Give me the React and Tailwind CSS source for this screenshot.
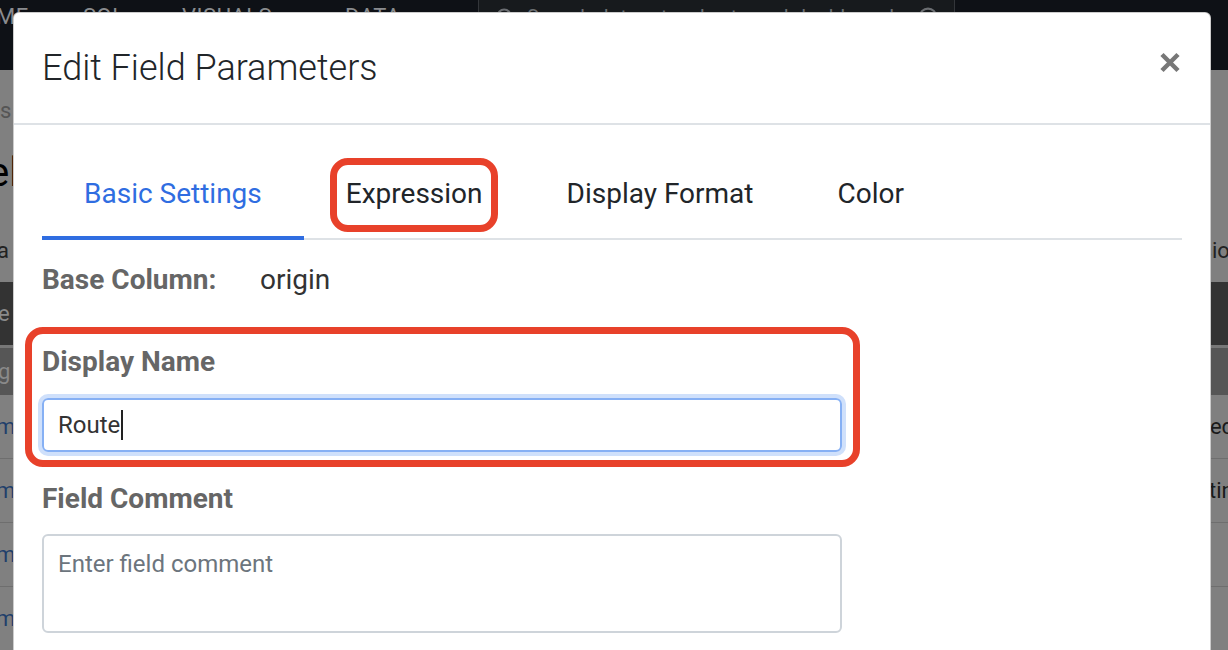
import { Search, CircleX } from 'lucide-react';

const tabs = ['Basic Settings', 'Expression', 'Display Format', 'Color'];

function BackdropRow({ left, right, className = '', leftClass = '', rightClass = '' }) {
    return (
        <div className={`flex items-center justify-between overflow-hidden ${className}`}>
            <span className={leftClass}>{left}</span>
            <span className={rightClass}>{right}</span>
        </div>
    );
}

export default function App() {
    return (
        <div className="relative h-[650px] w-[1228px] overflow-hidden bg-[#808080] font-[Roboto,sans-serif]">
            {/* Page behind the modal */}
            <div className="flex flex-col">
                <nav className="flex h-[70px] bg-[#0e1116] text-[22px] leading-none tracking-wide text-[#8a8c8f]">
                    <div className="-ml-[4px] w-[87px] pt-[6px]">ME</div>
                    <div className="w-[99px] pt-[6px]">SQL</div>
                    <div className="w-[163px] pt-[6px]">VISUALS</div>
                    <div className="w-[133px] pt-[6px]">DATA</div>
                    <div className="flex w-[477px] items-start gap-3 border-x border-[#33363a] bg-[#171a1d] px-4 pt-[7px] text-[#6b6e72]">
                        <Search size={20} strokeWidth={2.5} />
                        <span className="flex-1 text-[20px]">Search datasets, charts and dashboards</span>
                        <CircleX size={20} strokeWidth={2.5} />
                    </div>
                </nav>

                <div className="h-[25px]" />
                <BackdropRow className="h-[30px] text-[22px] text-[#555]" left="s" />
                <div className="h-[25px]" />
                <BackdropRow className="h-[45px] text-[40px] text-black" left="el" leftClass="-ml-[12px]" />
                <div className="h-[40px]" />
                <BackdropRow className="h-[30px] text-[22px] text-[#222]" left="a" leftClass="-ml-[3px]" right="sion" rightClass="-mr-[14px]" />
                <div className="h-[17px]" />
                <BackdropRow className="h-[63px] bg-[#333] text-[22px] text-[#8a8a8a]" left="e" leftClass="-ml-[2px]" />
                <BackdropRow className="h-[50px] border-t-[3px] border-[#777] bg-[#565656] text-[22px] text-[#8a8a8a]" left="g" leftClass="-ml-[2px]" />
                <div className="flex flex-col text-[22px]">
                    <BackdropRow className="h-[64px] border-b border-[#6e6e6e] text-[#1f3f6b]" left="m" leftClass="-ml-[4px]" right="ed" rightClass="-mr-[6px] text-[#1a1a1a]" />
                    <BackdropRow className="h-[64px] border-b border-[#6e6e6e] text-[#1f3f6b]" left="m" leftClass="-ml-[4px]" right="ting" rightClass="-mr-[18px] text-[#1a1a1a]" />
                    <BackdropRow className="h-[64px] border-b border-[#6e6e6e] text-[#1f3f6b]" left="m" leftClass="-ml-[4px]" />
                    <BackdropRow className="h-[64px] border-b border-[#6e6e6e] text-[#1f3f6b]" left="m" leftClass="-ml-[4px]" />
                </div>
            </div>

            {/* Modal */}
            <div className="absolute left-[13px] top-[12px] w-[1198px] h-[700px] rounded-[6px] border border-black/20 bg-white">
                <div className="flex h-[112px] items-center justify-between border-b-2 border-[#dee2e6] px-[28px]">
                    <h2 className="text-[36px] font-light text-[#212529]">Edit Field Parameters</h2>
                    <svg width="22" height="21" viewBox="0 0 22 21" className="-mt-[12px] mr-[1px]">
                        <path d="M3 2.5L19 18.5M19 2.5L3 18.5" stroke="#777" strokeWidth="4.5" />
                    </svg>
                </div>

                <div className="px-[28px] pt-[27px]">
                    <ul className="flex border-b-2 border-[#dee2e6]">
                        {tabs.map((t, i) => (
                            <li
                                key={t}
                                className={`-mb-[2px] border-b-4 px-[42px] pt-[27px] pb-[27px] text-[28px] leading-[30px] ${i === 0 ? 'border-[#2f6de1] text-[#2f6de1]' : 'border-transparent text-[#212529]'}`}
                            >
                                {t}
                            </li>
                        ))}
                    </ul>

                    <div className="mt-[25px] flex h-[30px] items-center">
                        <span className="w-[218px] text-[28px] font-bold text-[#666]">Base Column:</span>
                        <span className="text-[28px] text-[#333]">origin</span>
                    </div>

                    <div className="mt-[52px] text-[28px] font-bold leading-[30px] text-[#666]">Display Name</div>
                    <div className="mt-[21px] flex h-[54px] w-[800px] items-center rounded-[6px] border-2 border-[#86b0f4] px-[14px] text-[24px] text-[#333] shadow-[0_0_0_4px_#cfe0fb]">
                        <span>Route</span>
                        <span className="ml-[1px] inline-block h-[30px] w-[2px] bg-[#222]" />
                    </div>

                    <div className="mt-[32px] text-[28px] font-bold leading-[30px] text-[#666]">Field Comment</div>
                    <div className="mt-[20px] h-[99px] w-[800px] rounded-[6px] border-2 border-[#ced4da] px-[14px] pt-[10px] text-[24px] text-[#6c757d]">
                        Enter field comment
                    </div>
                </div>
            </div>

            {/* Annotation highlights */}
            <div className="absolute left-[330px] top-[158px] h-[74px] w-[168px] rounded-[18px] border-[7px] border-[#e8412a]" />
            <div className="absolute left-[25px] top-[327px] h-[140px] w-[835px] rounded-[18px] border-[7px] border-[#e8412a]" />
        </div>
    );
}
